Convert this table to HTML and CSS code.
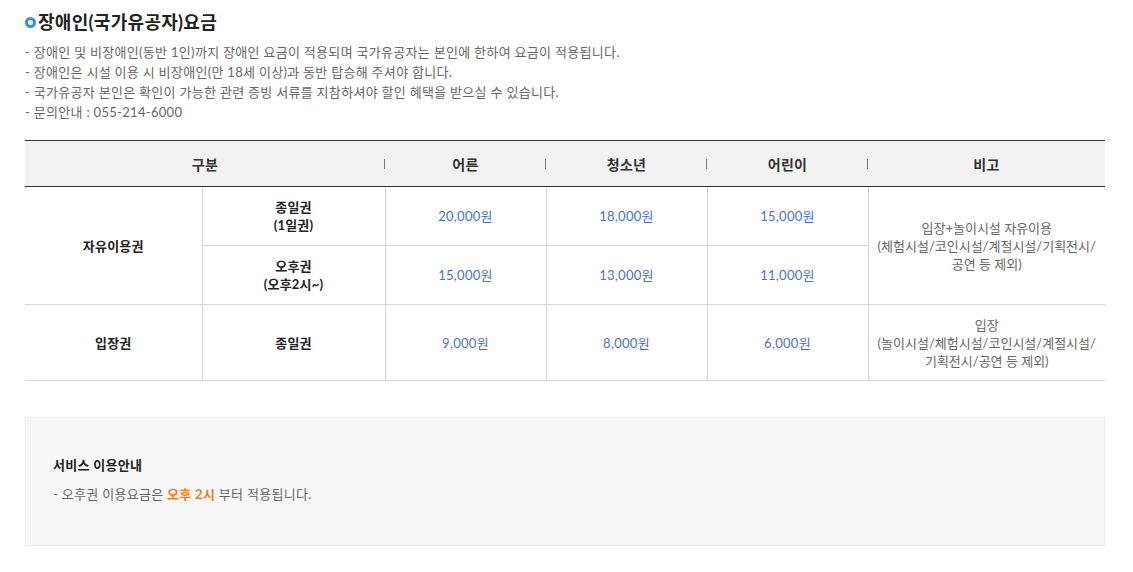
FILE: index.html
```html
<!DOCTYPE html>
<html lang="ko">
<head>
<meta charset="utf-8">
<title>장애인(국가유공자)요금</title>
<link rel="stylesheet" href="styles.css">
</head>
<body>
<div class="page">
  <h2 class="title"><span class="dot"></span>장애인(국가유공자)요금</h2>
  <ul class="desc">
    <li>- 장애인 및 비장애인(동반 1인)까지 장애인 요금이 적용되며 국가유공자는 본인에 한하여 요금이 적용됩니다.</li>
    <li>- 장애인은 시설 이용 시 비장애인(만 18세 이상)과 동반 탑승해 주셔야 합니다.</li>
    <li>- 국가유공자 본인은 확인이 가능한 관련 증빙 서류를 지참하셔야 할인 혜택을 받으실 수 있습니다.</li>
    <li>- 문의안내 : 055-214-6000</li>
  </ul>
  <table class="fee">
    <colgroup>
      <col class="c1"><col class="c2"><col class="c3"><col class="c4"><col class="c5"><col class="c6">
    </colgroup>
    <thead>
      <tr>
        <th colspan="2"><span class="sep">구분</span></th>
        <th><span class="sep">어른</span></th>
        <th><span class="sep">청소년</span></th>
        <th><span class="sep">어린이</span></th>
        <th>비고</th>
      </tr>
    </thead>
    <tbody>
      <tr class="r1">
        <td rowspan="2" class="lbl">자유이용권</td>
        <td class="lbl">종일권<br>(1일권)</td>
        <td class="price">20,000원</td>
        <td class="price">18,000원</td>
        <td class="price">15,000원</td>
        <td rowspan="2" class="note">입장+놀이시설 자유이용<br>(체험시설/코인시설/계절시설/기획전시/<br>공연 등 제외)</td>
      </tr>
      <tr class="r2">
        <td class="lbl">오후권<br>(오후2시~)</td>
        <td class="price">15,000원</td>
        <td class="price">13,000원</td>
        <td class="price">11,000원</td>
      </tr>
      <tr class="r3">
        <td class="lbl">입장권</td>
        <td class="lbl">종일권</td>
        <td class="price">9,000원</td>
        <td class="price">8,000원</td>
        <td class="price">6,000원</td>
        <td class="note">입장<br>(놀이시설/체험시설/코인시설/계절시설/<br>기획전시/공연 등 제외)</td>
      </tr>
    </tbody>
  </table>
  <div class="info">
    <h3 class="info-title">서비스 이용안내</h3>
    <p class="info-text">- 오후권 이용요금은 <strong class="hl">오후 2시</strong> 부터 적용됩니다.</p>
  </div>
</div>
</body>
</html>
```
FILE: styles.css
```css
* { box-sizing: border-box; }
html, body { margin: 0; padding: 0; background: #fff; }
body {
  font-family: Lato, "Noto Sans CJK KR", sans-serif;
  color: #666;
  font-size: 13px;
  letter-spacing: 0.3px;
}
.page {
  width: 1133px;
  padding: 10px 28px 0 25px;
}
.title {
  margin: 0;
  display: flex;
  align-items: center;
  font-size: 18px;
  font-weight: 700;
  color: #222;
  line-height: 24px;
  letter-spacing: 0.3px;
}
.dot {
  width: 11px;
  height: 11px;
  border: 3px solid #3391dc;
  border-radius: 50%;
  margin-right: 2px;
  flex: none;
}
.desc {
  list-style: none;
  margin: 8px 0 0;
  padding: 0;
  line-height: 20px;
  color: #666;
}
.fee {
  width: 1080px;
  margin-top: 18px;
  border-collapse: collapse;
  table-layout: fixed;
  text-align: center;
}
.c1 { width: 177px; }
.c2 { width: 183px; }
.c3 { width: 161px; }
.c4 { width: 161px; }
.c5 { width: 161px; }
.c6 { width: 237px; }
.fee thead th {
  height: 46px;
  background: #f2f2f2;
  border-top: 1px solid #333;
  border-bottom: 1px solid #333;
  font-size: 14px;
  font-weight: 700;
  color: #333;
  position: relative;
  padding: 0;
}
.fee thead th .sep { display: inline-block; }
.fee thead th:not(:last-child)::after {
  content: "";
  position: absolute;
  right: 0;
  top: 18px;
  width: 1px;
  height: 10px;
  background: #777;
}
.fee td {
  border: 1px solid #d5d5d5;
  padding: 0;
  line-height: 18px;
  color: #666;
}
.fee tbody tr td:first-child { border-left: none; }
.fee tbody tr td:last-child { border-right: none; }
.fee tbody tr.r2 td:first-child { border-left: 1px solid #d5d5d5; }
.fee tbody tr.r1 td.note { border-right: none; }
.r1 td, .r2 td { height: 59px; }
.r3 td { height: 76px; }
.fee td.lbl {
  font-weight: 700;
  color: #222;
  letter-spacing: 0.2px;
}
.fee td.price { color: #4a72c8; }
.fee td.note { color: #666; letter-spacing: 0; }
.info {
  width: 1080px;
  margin-top: 36px;
  background: #f7f7f7;
  border: 1px solid #ececec;
  padding: 37px 27px 41px;
}
.info-title {
  margin: 0;
  font-size: 13px;
  font-weight: 700;
  color: #222;
  line-height: 20px;
}
.info-text {
  margin: 9px 0 0;
  line-height: 20px;
  color: #666;
}
.hl { color: #f07a1c; font-weight: 700; }
```
